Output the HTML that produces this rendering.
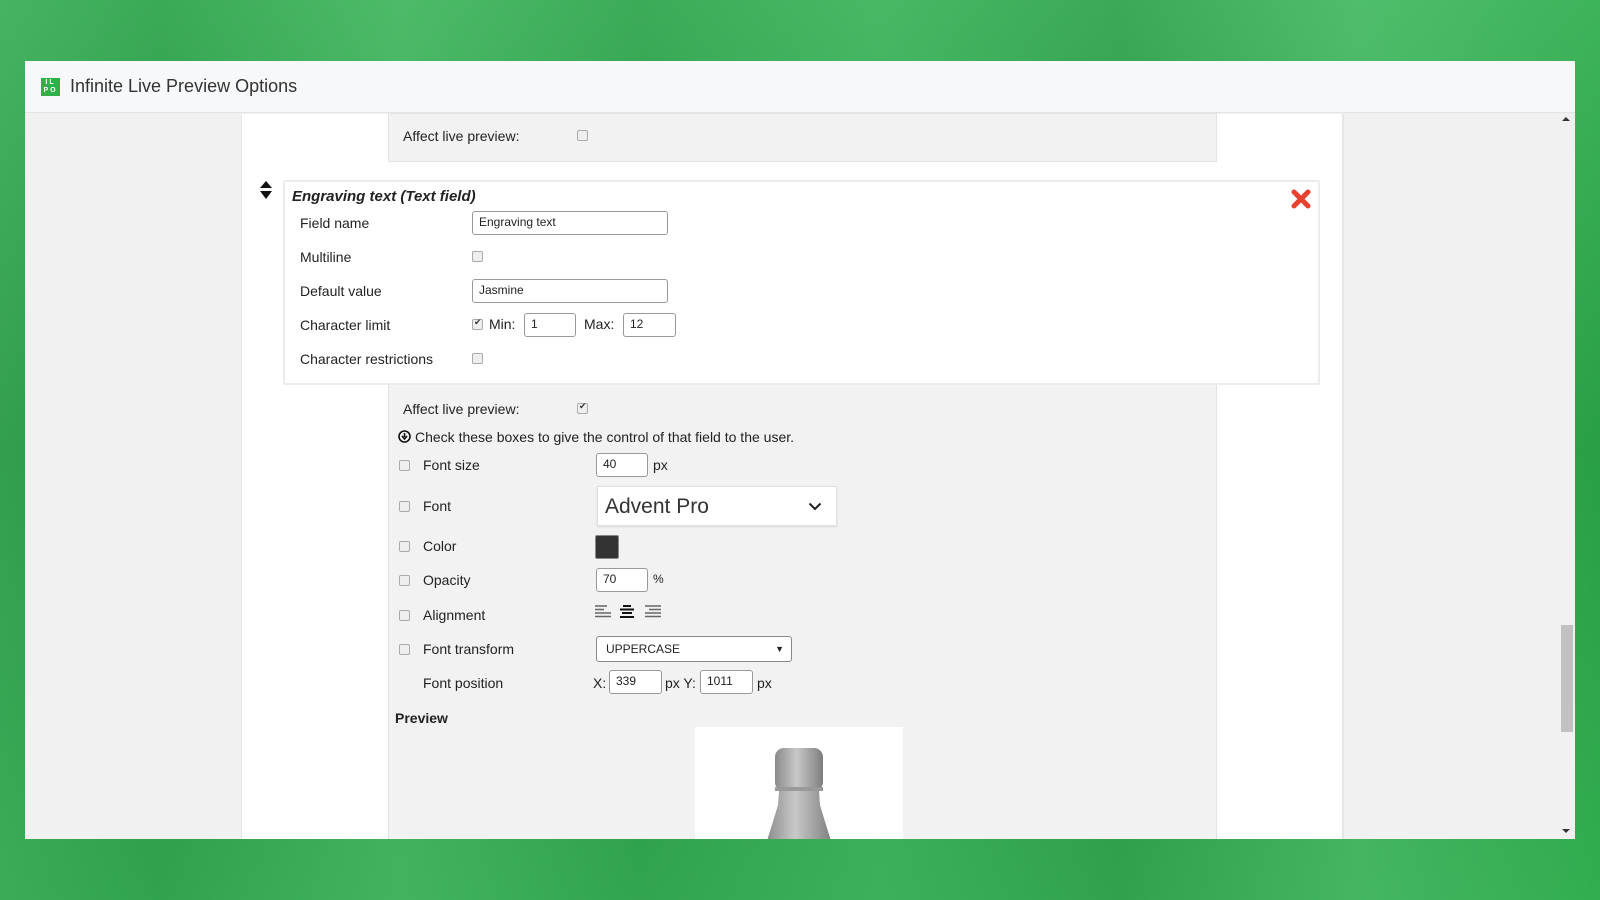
<!DOCTYPE html>
<html><head><meta charset="utf-8"><style>
*{box-sizing:border-box;margin:0;padding:0}
body{width:1600px;height:900px;overflow:hidden;position:relative;font-family:"Liberation Sans",Arial,sans-serif;color:#222;
background:linear-gradient(90deg,#3aa856 0%,#2a9a45 10%,#45b460 25%,#2c9c48 40%,#3db05a 55%,#2a9846 70%,#49b865 85%,#2ea84a 100%);}
.bg2{position:absolute;inset:0;background:linear-gradient(180deg,rgba(90,200,120,.35) 0%,rgba(20,120,50,.2) 50%,rgba(60,180,90,.35) 100%)}
.win{position:absolute;left:25px;top:61px;width:1550px;height:778px;background:#f1f1f1;overflow:hidden}
.hdr{position:absolute;left:0;top:0;width:100%;height:52px;background:#f7f8f9;border-bottom:1px solid #e4e4e4}
.logo{position:absolute;left:16px;top:17px;width:19px;height:18px;background:#2db24a;color:#fff;font-size:7px;font-weight:bold;line-height:8px;text-align:center;letter-spacing:2px;padding-top:1px}
.title{position:absolute;left:45px;top:15px;font-size:18px;color:#333}
.white{position:absolute;left:216px;top:53px;width:1103px;height:730px;background:#fff;border-right:2px solid #e6e6e6;border-left:1px solid #e8e8e8}
.abs{position:absolute}
.panel{position:absolute;background:#f2f2f2;border:1px solid #e2e2e2}
.box{position:absolute;background:#fff;border:2px solid #ececec;border-radius:2px}
.t{position:absolute;font-size:14px;white-space:nowrap;line-height:16px}
.inp{position:absolute;border:1px solid #999;border-radius:3px;background:#fff;font-size:12px;padding-left:6px;line-height:20px}
.cb{position:absolute;width:11px;height:11px;border:1px solid #aaa;border-radius:2px;background:#eee}
.cb.on::after{content:"✔";position:absolute;left:1px;top:-3px;font-size:9px;color:#333}
.sb{position:absolute;left:1536px;top:564px;width:12px;height:107px;background:#c1c1c1}
</style></head><body>
<div class="bg2"></div>
<div class="win">
 <div class="hdr"><div class="logo">IL<br>PO</div><div class="title">Infinite Live Preview Options</div></div>
 <div class="white"></div>
 <div class="panel" style="left:363px;top:52px;width:829px;height:49px"></div>
 <div class="t" style="left:378px;top:67px">Affect live preview:</div>
 <div class="cb" style="left:552px;top:69px"></div>

 <div class="panel" style="left:363px;top:320px;width:829px;height:470px;border-top:none"></div>
 <div class="box" style="left:258px;top:119px;width:1037px;height:205px"></div>
 <svg class="abs" style="left:234px;top:120px" width="14" height="18" viewBox="0 0 14 18"><path d="M7 0L13 7H1Z M7 18L13 10H1Z" fill="#111"/></svg>
 <svg class="abs" style="left:1266px;top:128px" width="20" height="20" viewBox="0 0 20 20"><path d="M3 3L17 17M17 3L3 17" stroke="#e8412f" stroke-width="5" stroke-linecap="round"/></svg>
 <div class="t" style="left:267px;top:128px;font-weight:bold;font-style:italic;font-size:15px">Engraving text (Text field)</div>
 <div class="t" style="left:275px;top:154px">Field name</div>
 <div class="inp" style="left:447px;top:150px;width:196px;height:24px">Engraving text</div>
 <div class="t" style="left:275px;top:188px">Multiline</div>
 <div class="cb" style="left:447px;top:190px"></div>
 <div class="t" style="left:275px;top:222px">Default value</div>
 <div class="inp" style="left:447px;top:218px;width:196px;height:24px">Jasmine</div>
 <div class="t" style="left:275px;top:256px">Character limit</div>
 <div class="cb on" style="left:447px;top:258px"></div>
 <div class="t" style="left:464px;top:255px">Min:</div>
 <div class="inp" style="left:499px;top:252px;width:52px;height:24px">1</div>
 <div class="t" style="left:559px;top:255px">Max:</div>
 <div class="inp" style="left:598px;top:252px;width:53px;height:24px">12</div>
 <div class="t" style="left:275px;top:290px">Character restrictions</div>
 <div class="cb" style="left:447px;top:292px"></div>

 <div class="t" style="left:378px;top:340px">Affect live preview:</div>
 <div class="cb on" style="left:552px;top:342px"></div>
 <svg class="abs" style="left:373px;top:369px" width="13" height="13" viewBox="0 0 13 13"><circle cx="6.5" cy="6.5" r="5.5" fill="none" stroke="#111" stroke-width="1.6"/><path d="M6.5 3v4M4 6l2.5 3 2.5-3" stroke="#111" stroke-width="1.6" fill="none"/></svg>
 <div class="t" style="left:390px;top:368px">Check these boxes to give the control of that field to the user.</div>

 <div class="cb" style="left:374px;top:399px"></div><div class="t" style="left:398px;top:396px">Font size</div>
 <div class="inp" style="left:571px;top:392px;width:52px;height:24px">40</div><div class="t" style="left:628px;top:396px">px</div>
 <div class="cb" style="left:374px;top:440px"></div><div class="t" style="left:398px;top:437px">Font</div>
 <div class="abs" style="left:572px;top:425px;width:240px;height:40px;background:#fff;border:1px solid #e0e0e0;box-shadow:0 1px 2px rgba(0,0,0,.1);font-size:21px;padding:8px 0 0 7px;color:#333">Advent Pro
  <svg class="abs" style="left:210px;top:15px" width="14" height="9" viewBox="0 0 14 9"><path d="M1.5 1.5L7 7l5.5-5.5" stroke="#222" stroke-width="2" fill="none"/></svg></div>
 <div class="cb" style="left:374px;top:480px"></div><div class="t" style="left:398px;top:477px">Color</div>
 <div class="abs" style="left:570px;top:474px;width:24px;height:24px;background:#333;border:1px solid #888;border-radius:2px"></div>
 <div class="cb" style="left:374px;top:514px"></div><div class="t" style="left:398px;top:511px">Opacity</div>
 <div class="inp" style="left:571px;top:507px;width:52px;height:24px">70</div><div class="t" style="left:628px;top:510px;font-size:12px">%</div>
 <div class="cb" style="left:374px;top:549px"></div><div class="t" style="left:398px;top:546px">Alignment</div>
 <svg class="abs" style="left:570px;top:544px" width="70" height="14" viewBox="0 0 70 14"><g stroke="#666" stroke-width="1.6"><path d="M0 1h12M0 4.5h9M0 8h16M0 11.5h16"/><path d="M50 1h16M54 4.5h12M50 8h16M50 11.5h16"/></g><g stroke="#111" stroke-width="2"><path d="M28 1h8M25 4.5h14M27 8h10M25 12h14"/></g></svg>
 <div class="cb" style="left:374px;top:583px"></div><div class="t" style="left:398px;top:580px">Font transform</div>
 <div class="inp" style="left:571px;top:575px;width:196px;height:26px;border-color:#888;padding-left:9px;line-height:24px">UPPERCASE<span style="position:absolute;right:7px;top:0;font-size:9px">▼</span></div>
 <div class="t" style="left:398px;top:614px">Font position</div>
 <div class="t" style="left:568px;top:614px">X:</div>
 <div class="inp" style="left:584px;top:609px;width:53px;height:24px">339</div>
 <div class="t" style="left:640px;top:614px">px Y:</div>
 <div class="inp" style="left:675px;top:609px;width:53px;height:24px">1011</div>
 <div class="t" style="left:732px;top:614px">px</div>
 <div class="t" style="left:370px;top:649px;font-weight:bold">Preview</div>
 <div class="abs" style="left:670px;top:666px;width:208px;height:120px;background:#fff">
  <svg class="abs" style="left:0;top:0" width="208" height="120" viewBox="0 0 208 120"><defs><linearGradient id="g" x1="0" x2="1"><stop offset="0" stop-color="#8a8a8a"/><stop offset=".45" stop-color="#c8c8c8"/><stop offset="1" stop-color="#7d7d7d"/></linearGradient></defs>
  <path d="M84 64 L124 64 L125 78 Q130 95 138 120 L70 120 Q78 95 83 78Z" fill="url(#g)"/>
  <rect x="80" y="21" width="48" height="43" rx="9" fill="url(#g)"/>
  <rect x="80" y="60" width="48" height="4" fill="#999"/></svg>
 </div>
 <div class="sb"></div>
 <div class="abs" style="left:1537px;top:56px;width:0;height:0;border-left:4px solid transparent;border-right:4px solid transparent;border-bottom:4px solid #333"></div>
 <div class="abs" style="left:1537px;top:768px;width:0;height:0;border-left:4px solid transparent;border-right:4px solid transparent;border-top:4px solid #333"></div>
</div>
</body></html>
